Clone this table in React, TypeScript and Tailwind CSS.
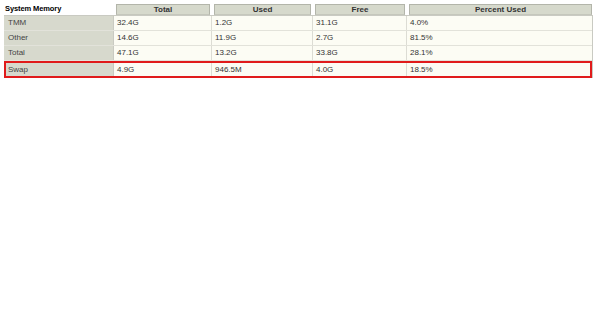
import React from 'react';

type Row = { label: string; total: string; used: string; free: string; pct: string; swap?: boolean };

const rows: Row[] = [
  { label: 'TMM', total: '32.4G', used: '1.2G', free: '31.1G', pct: '4.0%' },
  { label: 'Other', total: '14.6G', used: '11.9G', free: '2.7G', pct: '81.5%' },
  { label: 'Total', total: '47.1G', used: '13.2G', free: '33.8G', pct: '28.1%' },
  { label: 'Swap', total: '4.9G', used: '946.5M', free: '4.0G', pct: '18.5%', swap: true },
];

const cols = 'grid grid-cols-[110px_98px_101px_94px_1fr]';

const HeadCell: React.FC<{ children: React.ReactNode; last?: boolean }> = ({ children, last }) => (
  <div className={`pl-[2px] pt-[1px] ${last ? 'pr-[1px]' : 'pr-[2px]'}`}>
    <div className="h-[11px] bg-[#d6d9cc] border border-[#b3b5aa] border-b-[#c5c7bc] flex items-center justify-center font-bold text-[#333]">
      {children}
    </div>
  </div>
);

export default function App() {
  return (
    <div className="w-[600px] h-[321px] bg-white pt-[3px] pl-[4px] text-[8px] leading-none text-[#333]" style={{ fontFamily: '"Liberation Sans", Arial, sans-serif' }}>
      <div className="w-[589px]">
        <div className={cols}>
          <div className="h-[12px] flex items-center pl-[1px] font-bold text-black text-[7.5px] tracking-[-0.1px]">System Memory</div>
          <HeadCell>Total</HeadCell>
          <HeadCell>Used</HeadCell>
          <HeadCell>Free</HeadCell>
          <HeadCell last>Percent Used</HeadCell>
        </div>
        <div className="border-t border-r border-[#c9cac2]">
          {rows.map((r) => (
            <div
              key={r.label}
              className={`${cols} ${r.swap ? 'h-[17px] outline-2 outline-[#e01b1b] -outline-offset-2' : 'h-[15px] border-b border-[#e2e2da]'}`}
            >
              <div className="bg-[#d7d9cd] flex items-center pl-[4px] text-[#444] border-r border-[#c9cac2]">{r.label}</div>
              <div className="bg-[#fcfcf4] flex items-center pl-[3px] border-r border-[#dcdcd4]">{r.total}</div>
              <div className="bg-[#fcfcf4] flex items-center pl-[3px] border-r border-[#dcdcd4]">{r.used}</div>
              <div className="bg-[#fcfcf4] flex items-center pl-[3px] border-r border-[#dcdcd4]">{r.free}</div>
              <div className="bg-[#fcfcf4] flex items-center pl-[3px]">{r.pct}</div>
            </div>
          ))}
        </div>
      </div>
    </div>
  );
}
